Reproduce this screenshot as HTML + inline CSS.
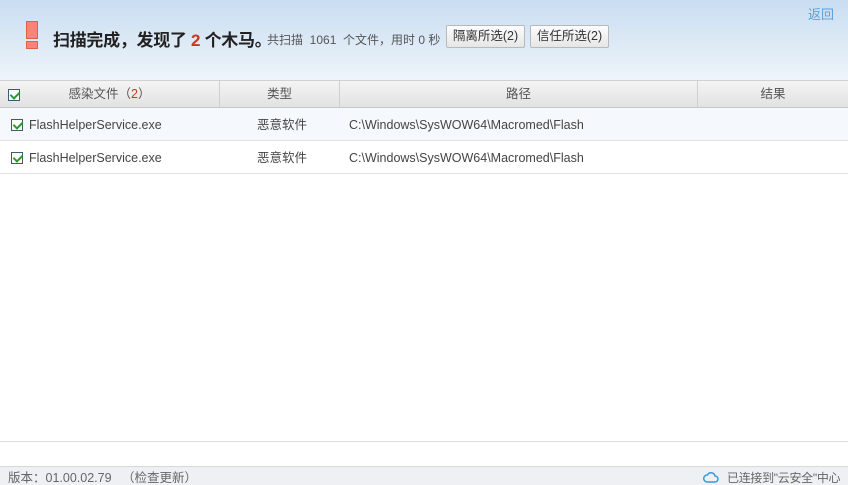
<!DOCTYPE html>
<html><head><meta charset="utf-8"><style>
*{margin:0;padding:0;box-sizing:border-box}
html,body{width:848px;height:485px;overflow:hidden}
body{background:#fff;font-family:"Liberation Sans","Noto Sans CJK SC",sans-serif;font-size:12px;color:#444;position:relative;white-space:nowrap}
.hdr{position:absolute;left:0;top:0;width:848px;height:80px;background:linear-gradient(#c9ddf1,#eef4fa)}
.back{position:absolute;right:14px;top:4px;color:#5aa0d8;font-size:13px}
.ex{position:absolute;left:26px;top:21px;width:12px;height:18px;background:#f88376;border:1px solid #e06050}
.ex2{position:absolute;left:26px;top:41px;width:12px;height:8px;background:#f88376;border:1px solid #e06050}
.title{position:absolute;left:53px;top:26px;font-size:17px;font-weight:bold;color:#222;letter-spacing:-0.3px}
.title b{color:#c8391c}
.sub{position:absolute;left:267px;top:31px;font-size:12px;color:#555}
.btn{position:absolute;top:25px;height:23px;border:1px solid #b9b9b9;border-radius:2px;background:linear-gradient(#fdfdfd,#e6e6e6);font-size:12.5px;color:#333;line-height:21px;text-align:center}
.th{position:absolute;top:80px;height:28px;background:linear-gradient(#f4f4f4,#e2e2e2);border-top:1px solid #d0d0d0;border-bottom:1px solid #c8c8c8;border-right:1px solid #cfcfcf;text-align:center;line-height:26px;color:#555;font-size:12.5px}
.row{position:absolute;left:0;width:848px;height:33px;border-bottom:1px solid #e2e2e2;line-height:34px;font-size:12.5px;color:#444}
.cb{position:absolute;width:12px;height:12px;border:1px solid #3a5d73;background:#fff}
.cb:after{content:"";position:absolute;left:3px;top:0px;width:4px;height:7px;border:solid #2a9a2a;border-width:0 2px 2px 0;transform:rotate(45deg)}
.foot{position:absolute;left:0;top:466px;width:848px;height:19px;background:#eef0f3;border-top:1px solid #d8d8d8;color:#666;font-size:12.5px;line-height:22px}
</style></head><body>
<div class="hdr">
<div class="back">返回</div>
<div class="ex"></div><div class="ex2"></div>
<div class="title">扫描完成，发现了 <b>2</b> 个木马。</div>
<div class="sub">共扫描 &nbsp;1061 &nbsp;个文件，用时 0 秒</div>
<div class="btn" style="left:446px;width:79px">隔离所选(2)</div>
<div class="btn" style="left:530px;width:79px">信任所选(2)</div>
</div>
<div class="th" style="left:0;width:220px"><span class="cb" style="left:8px;top:8px"></span>感染文件（<span style="color:#c8391c">2</span>）</div>
<div class="th" style="left:220px;width:120px">类型</div>
<div class="th" style="left:340px;width:358px">路径</div>
<div class="th" style="left:698px;width:150px;border-right:none">结果</div>
<div class="row" style="top:108px;background:#f5f9fd"><span class="cb" style="left:11px;top:11px"></span><span style="position:absolute;left:29px">FlashHelperService.exe</span><span style="position:absolute;left:257px">恶意软件</span><span style="position:absolute;left:349px">C:\Windows\SysWOW64\Macromed\Flash</span></div>
<div class="row" style="top:141px"><span class="cb" style="left:11px;top:11px"></span><span style="position:absolute;left:29px">FlashHelperService.exe</span><span style="position:absolute;left:257px">恶意软件</span><span style="position:absolute;left:349px">C:\Windows\SysWOW64\Macromed\Flash</span></div>
<div style="position:absolute;left:0;top:441px;width:848px;height:1px;background:#dcdcdc"></div>
<div class="foot"><span style="position:absolute;left:8px">版本：01.00.02.79 &nbsp;&nbsp;（检查更新）</span>
<svg style="position:absolute;left:703px;top:4px" width="16" height="12" viewBox="0 0 16 12"><path d="M4 11h8a3 3 0 0 0 0-6 4 4 0 0 0-7.5-1A3.5 3.5 0 0 0 4 11z" fill="none" stroke="#3a9ad8" stroke-width="1.5"/></svg>
<span style="position:absolute;left:727px;font-size:12px;letter-spacing:-0.3px">已连接到"云安全"中心</span></div>
</body></html>
